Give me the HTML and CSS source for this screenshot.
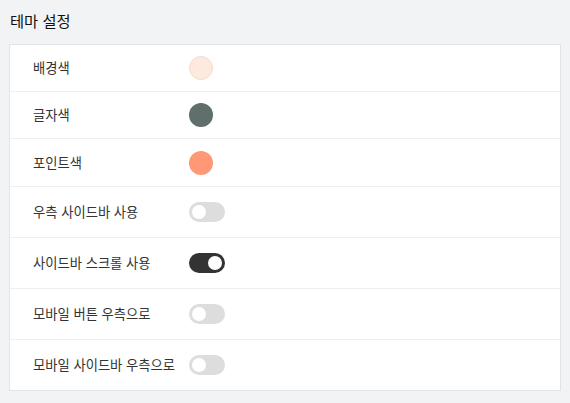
FILE: index.html
```html
<!DOCTYPE html>
<html lang="ko">
<head>
<meta charset="utf-8">
<link rel="stylesheet" href="styles.css">
</head>
<body>
<div class="page">
  <h2 class="title">테마 설정</h2>
  <div class="card">
    <div class="row color-row">
      <span class="label">배경색</span>
      <span class="swatch swatch-bg"></span>
    </div>
    <div class="row color-row">
      <span class="label">글자색</span>
      <span class="swatch swatch-text"></span>
    </div>
    <div class="row color-row last-color">
      <span class="label">포인트색</span>
      <span class="swatch swatch-point"></span>
    </div>
    <div class="row toggle-row">
      <span class="label">우측 사이드바 사용</span>
      <span class="toggle"><span class="knob"></span></span>
    </div>
    <div class="row toggle-row">
      <span class="label">사이드바 스크롤 사용</span>
      <span class="toggle on"><span class="knob"></span></span>
    </div>
    <div class="row toggle-row">
      <span class="label">모바일 버튼 우측으로</span>
      <span class="toggle"><span class="knob"></span></span>
    </div>
    <div class="row toggle-row">
      <span class="label">모바일 사이드바 우측으로</span>
      <span class="toggle"><span class="knob"></span></span>
    </div>
  </div>
</div>
</body>
</html>
```
FILE: styles.css
```css
html, body {
  margin: 0;
  padding: 0;
  background: #f2f3f5;
}
body {
  font-family: "Noto Sans CJK KR", "Noto Sans", sans-serif;
  color: #333;
}
.page {
  padding: 8px 9px 0 9px;
  width: 552px;
}
.title {
  margin: 0;
  font-size: 15.3px;
  font-weight: 400;
  color: #111;
  line-height: 24px;
  padding-left: 1px;
  height: 36px;
}
.card {
  background: #fff;
  border: 1px solid #dfe3ea;
  display: flex;
  flex-direction: column;
}
.row {
  display: flex;
  align-items: center;
  padding-left: 23px;
  border-top: 1px solid #eeeff2;
}
.row:first-child {
  border-top: none;
}
.color-row {
  height: 46px;
}
.last-color {
  height: 47px;
}
.toggle-row {
  height: 50px;
}
.label {
  width: 156px;
  font-size: 13.3px;
  line-height: 18px;
  color: #333;
}
.swatch {
  width: 24px;
  height: 24px;
  border-radius: 50%;
  box-sizing: border-box;
}
.swatch-bg {
  background: #fde9dd;
  border: 1px solid #f5dccd;
}
.swatch-text {
  background: #5f6f6c;
}
.swatch-point {
  background: #fe9875;
}
.toggle {
  width: 36px;
  height: 20px;
  border-radius: 10px;
  background: #dddddd;
  display: flex;
  align-items: center;
  padding: 0 3px;
  box-sizing: border-box;
}
.toggle .knob {
  width: 14px;
  height: 14px;
  border-radius: 50%;
  background: #fff;
}
.toggle.on {
  background: #333333;
  justify-content: flex-end;
}
```
